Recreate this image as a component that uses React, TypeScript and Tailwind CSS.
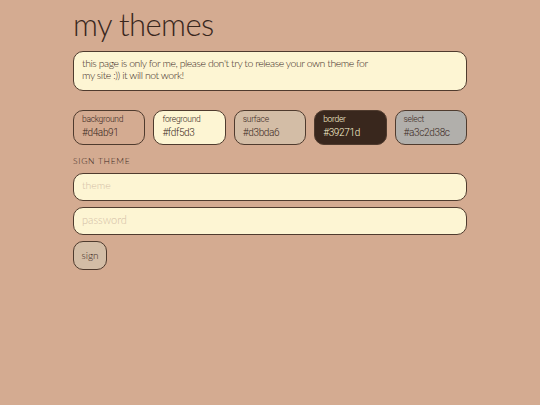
const swatches = [
  { label: "background", value: "#d4ab91", bg: "bg-[#d4ab91]", text: "text-[#39271d]" },
  { label: "foreground", value: "#fdf5d3", bg: "bg-[#fdf5d3]", text: "text-[#39271d]" },
  { label: "surface", value: "#d3bda6", bg: "bg-[#d3bda6]", text: "text-[#39271d]" },
  { label: "border", value: "#39271d", bg: "bg-[#39271d]", text: "text-[#fdf5d3]" },
  { label: "select", value: "#a3c2d38c", bg: "bg-[#b1afab]", text: "text-[#39271d]" },
];

export default function App() {
  return (
    <div className="min-h-[405px] bg-[#d4ab91] text-[#39271d] font-['Lato',sans-serif]">
      <div className="w-[394px] mx-auto">
        <h1 className="h-[51px] pt-1 text-[31px] leading-[40px] font-light tracking-[-0.6px]">my themes</h1>
        <p className="h-10 pl-2 pr-[90px] pt-[5px] bg-[#fdf5d3] border border-[#4f3b2e] rounded-[10px] text-[10.5px] leading-[12px] font-light tracking-[-0.46px]">
          this page is only for me, please don't try to release your own theme for my site :)) it will not work!
        </p>
        <div className="mt-[19px] grid grid-cols-5 gap-2">
          {swatches.map((s) => (
            <div key={s.label} className={`h-[35px] pl-2 pt-[3px] border border-[#4f3b2e] rounded-[10px] font-['Roboto',sans-serif] ${s.bg} ${s.text}`}>
              <div className="text-[8.5px] leading-[10px] font-light tracking-[-0.3px]">{s.label}</div>
              <div className="mt-[2px] text-[10px] leading-[13px] font-light tracking-[-0.35px]">{s.value}</div>
            </div>
          ))}
        </div>
        <h2 className="mt-[11px] h-[17px] text-[8.5px] leading-[11px] tracking-[0.7px] font-light uppercase">sign theme</h2>
        <input
          placeholder="theme"
          className="block w-full h-[28px] px-2 pb-1 bg-[#fdf5d3] border border-[#4f3b2e] rounded-[10px] text-[10.5px] font-light placeholder:text-[#d3bda6] outline-none"
        />
        <input
          placeholder="password"
          className="block mt-[6px] w-full h-[28px] px-2 pb-1 bg-[#fdf5d3] border border-[#4f3b2e] rounded-[10px] text-[11px] font-light placeholder:text-[#d3bda6] outline-none"
        />
        <button className="block mt-[6px] w-[34px] h-[29px] bg-[#d3bda6] border border-[#4f3b2e] rounded-[10px] text-[10px] font-light">
          sign
        </button>
      </div>
    </div>
  );
}
